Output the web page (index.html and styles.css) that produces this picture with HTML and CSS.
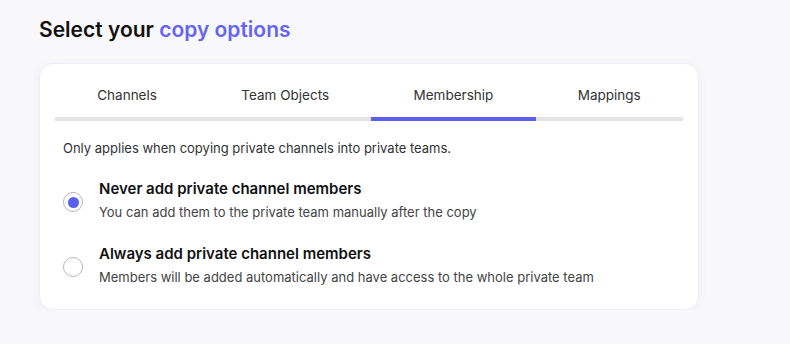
FILE: index.html
```html
<!DOCTYPE html>
<html lang="en">
<head>
  <meta charset="UTF-8">
  <meta name="viewport" content="width=device-width, initial-scale=1.0">
  <title>Copy options</title>
  <link rel="stylesheet" href="styles.css">
</head>
<body>
  <div class="page">
    <h1 class="title">Select your <span class="accent">copy options</span></h1>

    <div class="card">
      <div class="tabs">
        <div class="tab">Channels</div>
        <div class="tab">Team Objects</div>
        <div class="tab active">Membership</div>
        <div class="tab">Mappings</div>
      </div>

      <div class="panel">
        <p class="note">Only applies when copying private channels into private teams.</p>

        <label class="option">
          <span class="radio checked"></span>
          <span class="option-text">
            <span class="option-title">Never add private channel members</span>
            <span class="option-desc">You can add them to the private team manually after the copy</span>
          </span>
        </label>

        <label class="option">
          <span class="radio"></span>
          <span class="option-text">
            <span class="option-title">Always add private channel members</span>
            <span class="option-desc">Members will be added automatically and have access to the whole private team</span>
          </span>
        </label>
      </div>
    </div>
  </div>
</body>
</html>
```

FILE: styles.css
```css
body {
  margin: 0;
  background-color: #f8f8fa;
  font-family: Inter, 'Noto Sans', Arial, sans-serif;
  color: #222;
}

.page {
  padding: 17px 39px 0;
}

.title {
  margin: 0 0 20px;
  font-size: 21px;
  line-height: 26px;
  font-weight: 600;
  color: #111;
}

.accent {
  color: #6565f2;
}

.card {
  width: 660px;
  height: 247px;
  box-sizing: border-box;
  background-color: white;
  border: 1px solid #eeeef8;
  border-radius: 14px;
  box-shadow: 0 3px 8px rgba(110, 110, 200, 0.08);
  padding: 0 15px;
}

.tabs {
  display: flex;
  border-bottom: 4px solid #e4e4e6;
}

.tab {
  flex: 1 1 auto;
  text-align: center;
  font-size: 13.5px;
  color: #333;
  padding: 22px 0 13px;
  line-height: 18px;
  margin-bottom: -4px;
  border-bottom: 4px solid transparent;
}

.tab.active {
  border-bottom-color: #5b5ff0;
}

.panel {
  padding: 0 8px;
}

.note {
  margin: 18px 0 22px;
  font-size: 13px;
  line-height: 18px;
  color: #333;
}

.option {
  display: flex;
  align-items: center;
  gap: 16px;
  margin-bottom: 23px;
}

.radio {
  width: 20px;
  height: 20px;
  box-sizing: border-box;
  border: 1px solid #b8b8b8;
  border-radius: 50%;
  display: flex;
  align-items: center;
  justify-content: center;
  flex-shrink: 0;
  margin-top: 4px;
}

.radio.checked::after {
  content: '';
  width: 11px;
  height: 11px;
  border-radius: 50%;
  background-color: #5b5ff0;
}

.option-text {
  display: flex;
  flex-direction: column;
  gap: 6px;
}

.option-title {
  font-size: 15px;
  font-weight: 600;
  line-height: 19px;
  color: #111;
}

.option-desc {
  font-size: 13px;
  line-height: 17px;
  color: #444;
}
```
